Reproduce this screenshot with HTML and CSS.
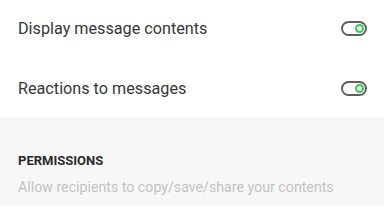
FILE: index.html
```html
<!DOCTYPE html>
<html>
<head>
<meta charset="utf-8">
<link rel="stylesheet" href="styles.css">
</head>
<body>
<div class="page">
  <div class="row row-first">
    <span class="label">Display message contents</span>
    <span class="toggle"><span class="knob"></span></span>
  </div>
  <div class="row row-second">
    <span class="label">Reactions to messages</span>
    <span class="toggle"><span class="knob"></span></span>
  </div>
  <div class="section">
    <div class="section-title">PERMISSIONS</div>
    <div class="section-desc">Allow recipients to copy/save/share your contents</div>
  </div>
</div>
</body>
</html>
```
FILE: styles.css
```css
html, body {
  margin: 0;
  padding: 0;
  background: #ffffff;
}
.page {
  width: 384px;
  height: 216px;
  overflow: hidden;
  font-family: Roboto, "Noto Sans", sans-serif;
}
.row {
  box-sizing: border-box;
  height: 60px;
  display: flex;
  align-items: center;
  justify-content: space-between;
  padding: 0 17px 0 18px;
}
.row-first {
  height: 57px;
}
.row-second {
  padding-top: 3px;
}
.label {
  font-size: 16.2px;
  color: #363636;
}
.toggle {
  box-sizing: border-box;
  width: 26px;
  height: 15px;
  border: 2px solid #606060;
  border-radius: 8px;
  background: #ffffff;
  display: flex;
  align-items: center;
  justify-content: flex-end;
  padding-right: 1.5px;
}
.knob {
  box-sizing: border-box;
  width: 9px;
  height: 9px;
  border-radius: 50%;
  border: 2.5px solid #43c35f;
  background: #dff5e4;
}
.section {
  background: #f7f7f7;
  height: 88px;
  padding: 36px 18px 0;
  box-sizing: border-box;
}
.section-title {
  font-size: 13px;
  font-weight: 700;
  color: #2a2a2a;
  line-height: 16px;
}
.section-desc {
  margin-top: 10px;
  font-size: 14.2px;
  color: #c3c3c3;
  line-height: 16px;
}
```
